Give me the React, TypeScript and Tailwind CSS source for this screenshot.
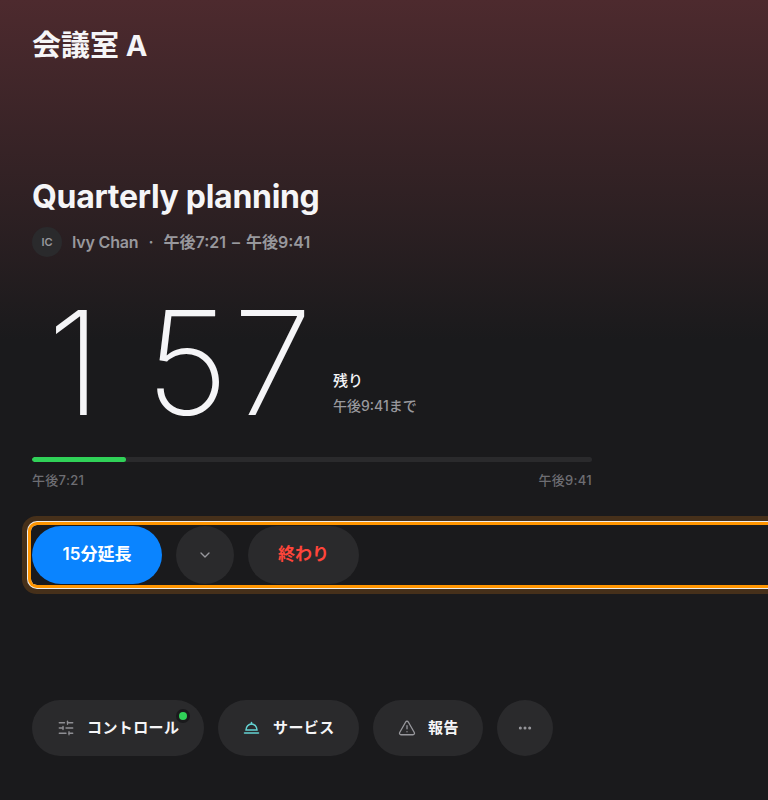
import { ChevronDown, Ellipsis, SlidersHorizontal, TriangleAlert } from "lucide-react";
import type { ReactNode } from "react";

const fontStack = { fontFamily: "Inter, 'Noto Sans CJK JP', sans-serif" };

function ServiceBell() {
  return (
    <svg width="18" height="18" viewBox="0 0 18 18" fill="none" stroke="currentColor" strokeWidth="1.5" strokeLinecap="round" className="text-[#64d2d2]">
      <path d="M3 11a5.5 6 0 0 1 11 0z" />
      <path d="M8.5 5V3.5" />
      <path d="M1.5 14h14" />
    </svg>
  );
}

function ToolPill({ icon, label, width, dot }: { icon: ReactNode; label: string; width: string; dot?: boolean }) {
  return (
    <button className={`relative flex h-14 items-center gap-3 rounded-full bg-[#2a2a2c] pl-[25px] text-[15px] font-semibold tracking-[0.4px] text-[#f5f5f7] ${width}`}>
      {icon}
      <span>{label}</span>
      {dot ? (
        <span className="absolute right-[17px] top-[12px] h-2 w-2 rounded-full bg-[#30d158] shadow-[0_0_0_3px_#1a1a1c]" />
      ) : null}
    </button>
  );
}

export default function App() {
  return (
    <div
      style={fontStack}
      className="flex h-[800px] w-[768px] flex-col overflow-hidden bg-[linear-gradient(180deg,#4d2a2e_0px,#1a1a1c_340px)] px-8 text-[#f5f5f7]"
    >
      <h1 className="mt-[27px] text-[29px] font-bold leading-[38px]">会議室 A</h1>

      <h2 className="mt-[112px] text-[32px] font-bold leading-[40px] tracking-[-0.3px]">Quarterly planning</h2>

      <div className="mt-[10px] flex h-[30px] items-center text-[16px] font-semibold text-[#98989d]">
        <span className="flex h-[30px] w-[30px] items-center justify-center rounded-full bg-[#2a2a2c] text-[11px] font-semibold">
          IC
        </span>
        <span className="ml-[10px] tracking-[-0.2px]">Ivy Chan</span>
        <span className="mx-[10px]">·</span>
        <span>午後7:21</span>
        <span className="mx-[6px]">–</span>
        <span>午後9:41</span>
      </div>

      <div className="mt-[26px] flex h-[160px] items-end">
        <div className="flex w-[287px] whitespace-nowrap pl-[15px] text-[144px] font-[250] leading-[160px] tracking-[2px]">
          <span>1</span>
          <span className="invisible">:</span>
          <span className="tracking-[4px]">57</span>
        </div>
        <div className="mb-[28px] ml-[14px]">
          <div className="text-[15px] font-medium leading-[20px]">残り</div>
          <div className="mt-[6px] text-[14px] font-medium leading-[18px] text-[#98989d]">午後9:41まで</div>
        </div>
      </div>

      <div className="mt-[14px] h-[5px] w-[560px] overflow-hidden rounded-full bg-[#2a2a2c]">
        <div className="h-full rounded-full bg-[#30d158]" style={{ width: "16.8%" }} />
      </div>
      <div className="mt-[10px] flex w-[560px] justify-between text-[13px] font-medium leading-[16px] tracking-[0.3px] text-[#6e6e73]">
        <span>午後7:21</span>
        <span>午後9:41</span>
      </div>

      <div className="-ml-px mt-[37px] flex w-[800px] shrink-0 gap-[14px] rounded-[6px] p-px shadow-[0_0_0_3px_#ff9500,0_0_0_4px_#ececec,0_0_0_9px_#46301a]">
        <button className="h-[58px] w-[130px] rounded-full bg-[#0a84ff] text-[17px] font-semibold text-white">
          15分延長
        </button>
        <button className="flex h-[58px] w-[58px] items-center justify-center rounded-full bg-[#2a2a2c] text-[#98989d]">
          <ChevronDown size={16} strokeWidth={2} />
        </button>
        <button className="h-[58px] w-[111px] rounded-full bg-[#2a2a2c] text-[17px] font-semibold text-[#ff453a]">
          終わり
        </button>
      </div>

      <div className="mt-[115px] flex gap-[14px]">
        <ToolPill dot width="w-[172px]" icon={<SlidersHorizontal size={18} strokeWidth={1.75} className="text-[#8e8e93]" />} label="コントロール" />
        <ToolPill width="w-[141px]" icon={<ServiceBell />} label="サービス" />
        <ToolPill width="w-[110px]" icon={<TriangleAlert size={18} strokeWidth={1.75} className="text-[#98989d]" />} label="報告" />
        <button className="flex h-14 w-14 items-center justify-center rounded-full bg-[#2a2a2c] text-[#98989d]">
          <Ellipsis size={16} strokeWidth={2.5} />
        </button>
      </div>
    </div>
  );
}
